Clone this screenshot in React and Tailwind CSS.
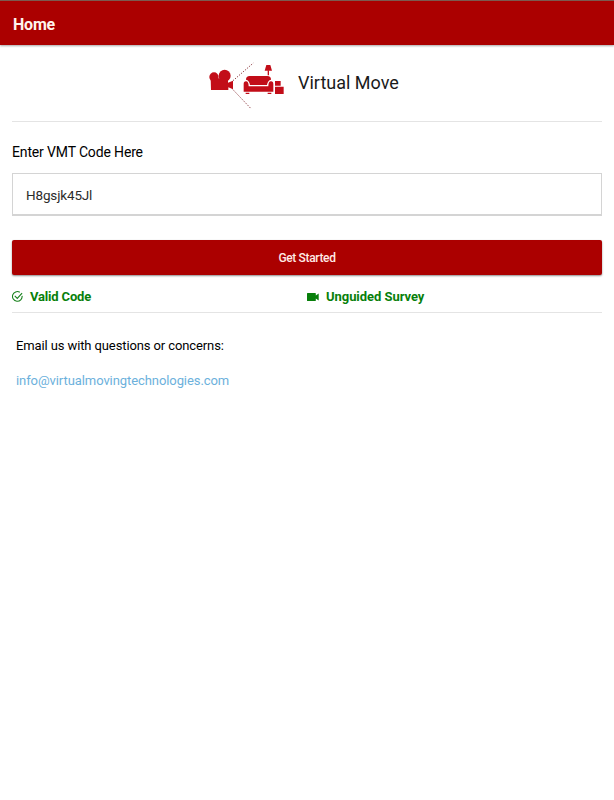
function MoveLogo() {
  return (
    <svg width="96" height="60" viewBox="0 0 288 180" fill="#c20d18" aria-hidden="true">
      <circle cx="42" cy="66" r="14" />
      <circle cx="74" cy="62" r="18" />
      <path d="M32 70h52v13l15-6v26l-14-6v8H33z" />
      <g fill="none" stroke="#8c3940" strokeWidth="2.8" strokeDasharray="4 4">
        <path d="M99 77L160 24" />
        <path d="M99 104L154 162" />
      </g>
      <path d="M199 30h12l5 17h-22z" />
      <path d="M203 46h4v15h-4z" />
      <path d="M138 74q0-11 11-11h53q11 0 11 11-10 2-12 16h-51q-2-14-12-16z" />
      <path d="M138 79q8 0 8 15h59q0-15 8-15 7 0 7 8v23h-89V87q0-8 7-8z" />
      <path d="M137 113h11v4h-11zM203 113h11v4h-11zM225 78h17v14h-17zM225 95h26v22h-26z" />
    </svg>
  );
}

function CheckCircle() {
  return (
    <svg width="11" height="11" viewBox="0 0 24 24" fill="none" stroke="#16801b" strokeWidth="2.4" aria-hidden="true">
      <path d="M22 10.5A10.5 10.5 0 1 1 17 2.8" />
      <path d="M6 10.5l5.5 5.5L22 4.5" />
    </svg>
  );
}

function VideoCamera() {
  return (
    <svg width="12" height="8" viewBox="0 0 12 8" fill="#087f0b" aria-hidden="true">
      <path d="M.6 0h7.6q.6 0 .6.6v2L11.7.5v7L8.8 5.4v2q0 .6-.6.6H.6Q0 8 0 7.4V.6Q0 0 .6 0z" />
    </svg>
  );
}

export default function App() {
  return (
    <div className="min-h-screen bg-white font-[Roboto,sans-serif] text-black">
      <header className="flex h-[45px] items-center border-t border-[#7c5a50] bg-[#ab0000] pl-[13px] pt-[3px] shadow-[0_1px_2px_rgba(0,0,0,0.35)]">
        <h1 className="text-[16px] leading-5 font-bold tracking-[-0.2px] text-[#fff3ed]">Home</h1>
      </header>

      <main className="px-3">
        <div className="flex h-[77px] border-b border-[#e4e4e4] pt-[10px] pl-[188px]">
          <MoveLogo />
          <h2 className="pt-[16px] pl-[2px] text-[18px] leading-6 whitespace-nowrap text-[#1a1a1a]">Virtual Move</h2>
        </div>

        <label htmlFor="code" className="block pt-[20px] text-[14px] leading-5 tracking-[-0.15px]">
          Enter VMT Code Here
        </label>
        <input
          id="code"
          type="text"
          defaultValue="H8gsjk45Jl"
          className="mt-[11px] block h-[43px] w-full border border-b-2 border-[#d4d4d4] pt-px pl-[13px] text-[13.5px] text-[#2b2b2b] tracking-[-0.15px] outline-none"
        />

        <button
          type="button"
          className="mt-6 block h-[35px] w-full rounded-[2px] bg-[#ab0000] text-[12px] font-medium tracking-[-0.35px] text-[#ffeae5] shadow-[0_1px_2px_rgba(0,0,0,0.45)]"
        >
          Get Started
        </button>

        <div className="flex h-[38px] border-b border-[#e4e4e4] pt-3 text-[13px] leading-5 font-bold text-[#087f0b]">
          <div className="flex h-5 w-1/2 items-center gap-[7px] pb-px">
            <CheckCircle />
            <span className="pt-px tracking-[-0.17px]">Valid Code</span>
          </div>
          <div className="flex h-5 w-1/2 items-center gap-[7px]">
            <VideoCamera />
            <span className="tracking-[-0.05px]">Unguided Survey</span>
          </div>
        </div>

        <div className="px-1 pt-[23px] text-[13px] leading-5">
          <p className="tracking-[-0.11px]">Email us with questions or concerns:</p>
          <a
            href="mailto:info@virtualmovingtechnologies.com"
            className="mt-[15px] block tracking-[-0.08px] text-[#6cb1dc]"
          >
            info@virtualmovingtechnologies.com
          </a>
        </div>
      </main>
    </div>
  );
}
